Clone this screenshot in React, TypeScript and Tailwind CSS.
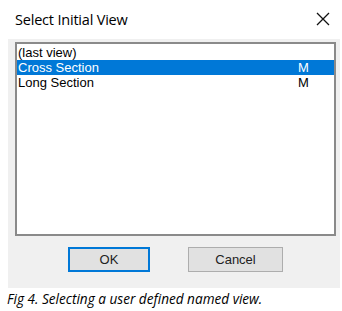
export default function App() {
  const rows = [
    { name: "(last view)", tag: "" },
    { name: "Cross Section", tag: "M", selected: true },
    { name: "Long Section", tag: "M" },
  ];

  return (
    <div className="w-[342px] h-[311px] bg-white overflow-hidden">
      {/* title bar */}
      <div className="h-[39px] flex items-center justify-between pl-[15px] pr-[12px]">
        <span className="text-[14.5px] text-black font-['Open_Sans',sans-serif] tracking-[-0.2px]">
          Select Initial View
        </span>
        <svg width="14" height="14" viewBox="0 0 14 14" className="mt-[-1px]">
          <path d="M1 1 L13 13 M13 1 L1 13" stroke="#111" strokeWidth="1.3" />
        </svg>
      </div>

      {/* dialog body */}
      <div className="ml-[8px] w-[332px] h-[249px] bg-[#f0f0f0] pt-[3px] pl-[7px]">
        <div className="w-[321px] h-[194px] bg-white border-2 border-[#8a8a8a] pt-[1px] font-['Liberation_Sans',Arial,sans-serif] text-[13px]">
          {rows.map((r) => (
            <div
              key={r.name}
              className={
                "h-[15px] leading-[15px] flex pl-[1px] " +
                (r.selected ? "bg-[#0078d7] text-white" : "text-black")
              }
            >
              <span className="w-[280px]">{r.name}</span>
              <span>{r.tag}</span>
            </div>
          ))}
        </div>

        <div className="flex mt-[11px] font-['Liberation_Sans',Arial,sans-serif] text-[13px] text-[#222]">
          <button className="ml-[53px] w-[82px] h-[25px] bg-[#e1e1e1] border-2 border-[#0078d7] flex items-center justify-center">
            OK
          </button>
          <button className="ml-[38px] w-[95px] h-[25px] bg-[#e1e1e1] border border-[#adadad] flex items-center justify-center">
            Cancel
          </button>
        </div>
      </div>

      <div className="pl-[7px] pt-[2px] italic text-[13.6px] leading-[17px] text-black font-['Open_Sans',sans-serif]">
        Fig 4. Selecting a user defined named view.
      </div>
    </div>
  );
}
